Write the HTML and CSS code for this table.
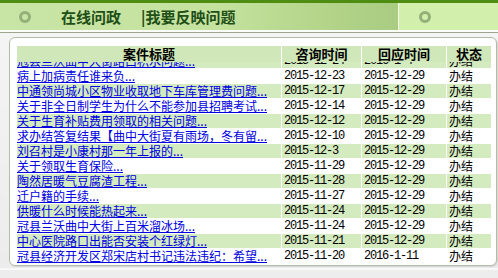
FILE: index.html
```html
<!DOCTYPE html>
<html lang="zh">
<head>
<meta charset="utf-8">
<link rel="stylesheet" href="styles.css">
</head>
<body>
<div class="top">
  <div class="top-left">
    <span class="ring"></span>
    <span class="title">在线问政</span>
    <span class="sub">|我要反映问题</span>
  </div>
  <div class="top-right"><span class="ring"></span></div>
</div>
<div class="top-line"></div>
<div class="main">
  <div class="panel">
    <div class="row head">
      <div class="c">案件标题</div>
      <div class="c">咨询时间</div>
      <div class="c">回应时间</div>
      <div class="c">状态</div>
    </div>
    <div class="body">
      <div class="list">
        <div class="row g"><div class="c t"><a href="#">冠县兰沃曲中大街路口积水问题...</a></div><div class="c">2015-12-24</div><div class="c">2016-1-4</div><div class="c">办结</div></div>
        <div class="row"><div class="c t"><a href="#">病上加病责任谁来负...</a></div><div class="c">2015-12-23</div><div class="c">2015-12-29</div><div class="c">办结</div></div>
        <div class="row g"><div class="c t"><a href="#">中通领尚城小区物业收取地下车库管理费问题...</a></div><div class="c">2015-12-17</div><div class="c">2015-12-29</div><div class="c">办结</div></div>
        <div class="row"><div class="c t"><a href="#">关于非全日制学生为什么不能参加县招聘考试...</a></div><div class="c">2015-12-14</div><div class="c">2015-12-29</div><div class="c">办结</div></div>
        <div class="row g"><div class="c t"><a href="#">关于生育补贴费用领取的相关问题...</a></div><div class="c">2015-12-12</div><div class="c">2015-12-29</div><div class="c">办结</div></div>
        <div class="row"><div class="c t"><a href="#">求办结答复结果【曲中大街夏有雨场，冬有留...</a></div><div class="c">2015-12-10</div><div class="c">2015-12-29</div><div class="c">办结</div></div>
        <div class="row g"><div class="c t"><a href="#">刘召村是小康村那一年上报的...</a></div><div class="c">2015-12-3</div><div class="c">2015-12-29</div><div class="c">办结</div></div>
        <div class="row"><div class="c t"><a href="#">关于领取生育保险...</a></div><div class="c">2015-11-29</div><div class="c">2015-12-29</div><div class="c">办结</div></div>
        <div class="row g"><div class="c t"><a href="#">陶然居暖气豆腐渣工程...</a></div><div class="c">2015-11-28</div><div class="c">2015-12-29</div><div class="c">办结</div></div>
        <div class="row"><div class="c t"><a href="#">迁户籍的手续...</a></div><div class="c">2015-11-27</div><div class="c">2015-12-29</div><div class="c">办结</div></div>
        <div class="row g"><div class="c t"><a href="#">供暖什么时候能热起来...</a></div><div class="c">2015-11-24</div><div class="c">2015-12-29</div><div class="c">办结</div></div>
        <div class="row"><div class="c t"><a href="#">冠县兰沃曲中大街上百米溜冰场...</a></div><div class="c">2015-11-24</div><div class="c">2015-12-29</div><div class="c">办结</div></div>
        <div class="row g"><div class="c t"><a href="#">中心医院路口出能否安装个红绿灯...</a></div><div class="c">2015-11-21</div><div class="c">2015-12-29</div><div class="c">办结</div></div>
        <div class="row"><div class="c t"><a href="#">冠县经济开发区郑宋店村书记违法违纪：希望...</a></div><div class="c">2015-11-20</div><div class="c">2016-1-11</div><div class="c">办结</div></div>
      </div>
    </div>
  </div>
</div>
<div class="foot"></div>
</body>
</html>
```

FILE: styles.css
```css
html, body {
  margin: 0;
  padding: 0;
}
body {
  width: 498px;
  height: 278px;
  overflow: hidden;
  background: #ededed;
  font-family: "Noto Sans CJK SC", "Liberation Sans", sans-serif;
}
.top {
  display: flex;
  height: 27px;
  border-top: 3px solid #4e8c12;
}
.top-left {
  width: 398px;
  display: flex;
  align-items: center;
  background: linear-gradient(90deg, #c9e5a6 0%, #c4e29e 55%, #b4d58a 80%, #a9cc82 100%);
}
.top-right {
  flex: 1;
  display: flex;
  align-items: center;
  border-left: 1px solid #f4fbe8;
  background: #d2efac;
}
.ring {
  width: 6px;
  height: 6px;
  border: 3px solid #93b078;
  border-radius: 50%;
  box-sizing: content-box;
}
.top-left .ring {
  margin-left: 19px;
  margin-right: 30px;
}
.top-right .ring {
  margin-left: 20px;
}
.title {
  font-size: 15px;
  font-weight: bold;
  color: #1f4f16;
}
.sub {
  margin-left: 20px;
  font-size: 15px;
  font-weight: bold;
  color: #1f4f16;
}
.top-line {
  height: 2px;
  background: #fbfdf8;
  border-bottom: 1px solid #9ca58f;
}
.main {
  padding: 4px 1px 0 9px;
  background: linear-gradient(180deg, #f4f4f4, #ececec);
}
.panel {
  height: 220px;
  border: 1px solid #b2bca6;
  border-radius: 6px;
  background: #fff;
  padding: 7px 5px 0 7px;
  box-shadow: 1px 1px 1px #d4d4d4;
}
.row {
  display: grid;
  grid-template-columns: 264px 79px 84px 44px;
  column-gap: 1px;
  height: 14px;
  margin-bottom: 1px;
  font-size: 12px;
  line-height: 14px;
}
.row .c {
  overflow: hidden;
  white-space: nowrap;
  padding-left: 2px;
  color: #000;
}
.row .c:nth-child(2), .row .c:nth-child(3) {
  font-family: "Liberation Mono", monospace;
  font-size: 12px;
  letter-spacing: -1.2px;
}
.row .c.t {
  padding-left: 0;
}
.row.g .c {
  background: #d4eabf;
}
.row.head {
  height: 16px;
  line-height: 16px;
  margin-top: 1px;
  margin-bottom: 0;
}
.row.head .c, .row.head .c:nth-child(2), .row.head .c:nth-child(3) {
  overflow: visible;
  background: #d0e7b9;
  font-family: "Noto Sans CJK SC", sans-serif;
  font-size: 13px;
  letter-spacing: 0;
  font-weight: bold;
  text-align: center;
  padding-left: 0;
}
.body {
  height: 202px;
  overflow: hidden;
}
.list {
  margin-top: -8px;
}
a {
  color: #0000e0;
  text-decoration: underline;
}
.foot {
  height: 2px;
  margin-top: 2px;
  background: #f8f8f8;
}
```
